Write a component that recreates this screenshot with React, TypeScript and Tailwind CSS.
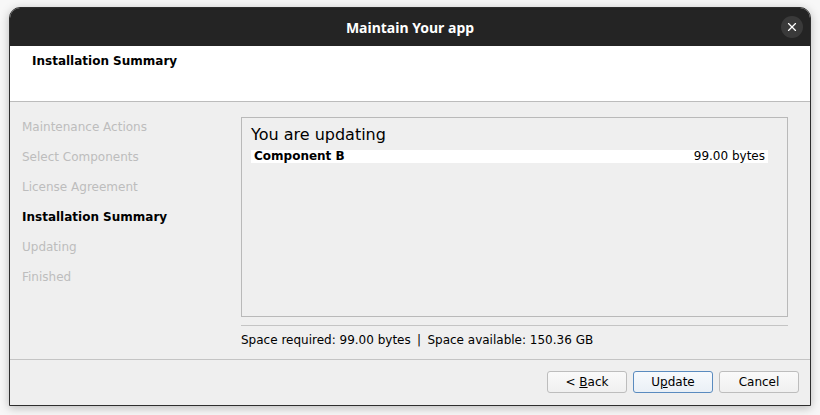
import { X } from 'lucide-react';

const steps = [
  { label: 'Maintenance Actions', active: false },
  { label: 'Select Components', active: false },
  { label: 'License Agreement', active: false },
  { label: 'Installation Summary', active: true },
  { label: 'Updating', active: false },
  { label: 'Finished', active: false },
];

export default function App() {
  return (
    <div
      className="w-[820px] h-[415px] bg-[#f7f7f7] pt-[7px] pl-[9px] overflow-hidden"
      style={{ fontFamily: '"DejaVu Sans", sans-serif' }}
    >
      <div className="w-[802px] h-[399px] flex flex-col bg-[#efefef] border border-[#2e2e2e] rounded-t-[11px] overflow-hidden shadow-[0_2px_10px_rgba(0,0,0,0.25)]">
        {/* Title bar */}
        <div className="h-[38px] shrink-0 bg-[#242424] relative flex items-center justify-center">
          <span className="text-white text-[14px] font-bold" style={{ fontFamily: '"Noto Sans", sans-serif' }}>
            Maintain Your app
          </span>
          <button className="absolute right-[7px] top-[8px] w-[22px] h-[22px] rounded-full bg-[#3a3a3a] flex items-center justify-center">
            <X className="w-[14px] h-[14px] text-white" strokeWidth={2} />
          </button>
        </div>

        {/* Header */}
        <div className="h-[56px] shrink-0 bg-white border-b border-[#bcbcbc] pl-[22px] pt-[7px]">
          <div className="text-[12px] font-bold text-black leading-[16px]">Installation Summary</div>
        </div>

        {/* Body */}
        <div className="flex-1 flex">
          <div className="w-[231px] shrink-0 pl-[12px] pt-[10px]">
            {steps.map((s) => (
              <div
                key={s.label}
                className={`h-[30px] leading-[30px] text-[12px] ${s.active ? 'font-bold text-black' : 'text-[#bdbdbd]'}`}
              >
                {s.label}
              </div>
            ))}
          </div>
          <div className="flex-1 pr-[22px] pt-[15px] flex flex-col">
            <div className="h-[200px] border border-[#b9b9b9] px-[9px] pt-[6px]">
              <div className="text-[16px] text-black leading-[22px]">You are updating</div>
              <div className="mt-[4px] mr-[10px] bg-white h-[13px] flex items-center justify-between px-[3px] text-[12px] leading-[13px] text-black">
                <span className="font-bold">Component B</span>
                <span>99.00 bytes</span>
              </div>
            </div>
            <div className="mt-[8px] border-t border-[#c4c4c4]" />
            <div className="mt-[5px] text-[12px] leading-[18px] text-black">
              Space required: 99.00 bytes <span className="mx-[2.5px]">|</span> Space available: 150.36 GB
            </div>
          </div>
        </div>

        {/* Footer */}
        <div className="h-[46px] shrink-0 border-t border-[#c4c4c4] flex justify-end items-start gap-[6px] pr-[11px] pt-[11px]">
          <button className="w-[80px] h-[22px] rounded-[3px] border border-[#bdbdbd] bg-gradient-to-b from-[#fafafa] to-[#f0f0f0] text-[12px] text-black">
            &lt; <span className="underline">B</span>ack
          </button>
          <button className="w-[80px] h-[22px] rounded-[3px] border border-[#5a8bbf] bg-gradient-to-b from-[#f7fafd] to-[#eaf0f6] text-[12px] text-black">
            U<span className="underline">p</span>date
          </button>
          <button className="w-[80px] h-[22px] rounded-[3px] border border-[#bdbdbd] bg-gradient-to-b from-[#fafafa] to-[#f0f0f0] text-[12px] text-black">
            Cancel
          </button>
        </div>
      </div>
    </div>
  );
}
